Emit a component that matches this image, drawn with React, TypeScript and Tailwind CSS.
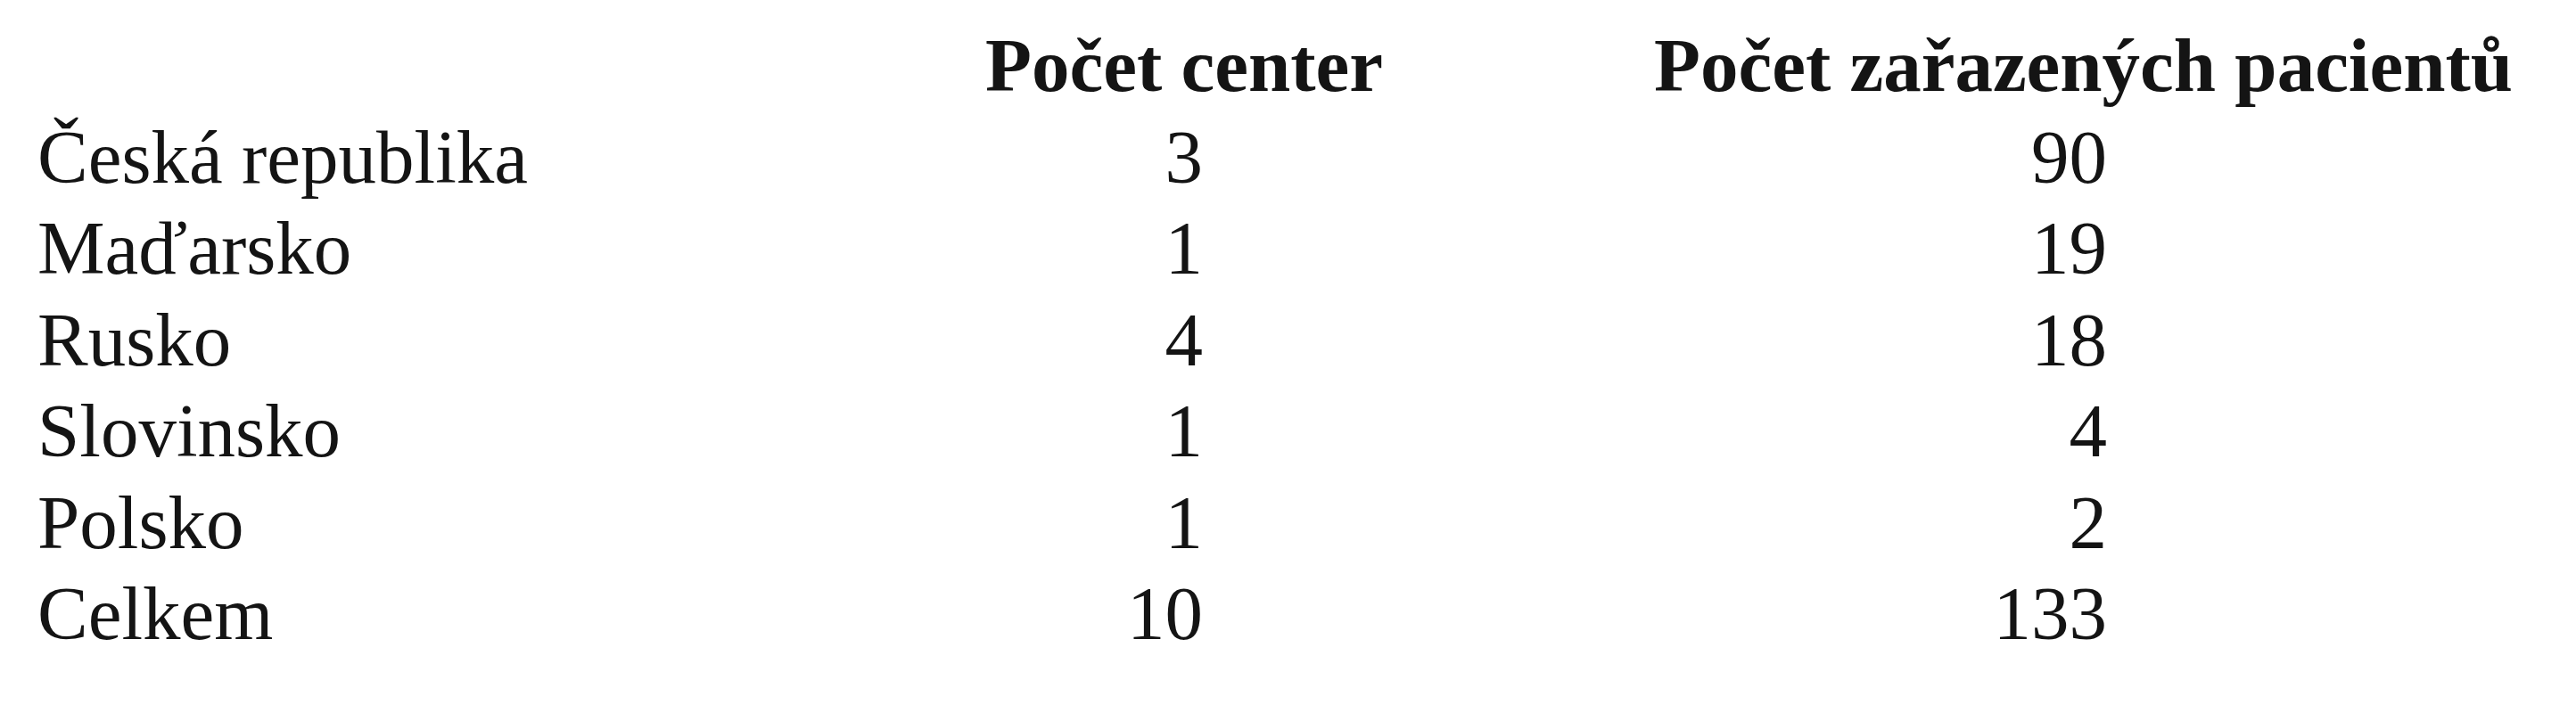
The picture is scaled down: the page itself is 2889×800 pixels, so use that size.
const rows = [
  { country: "Česká republika", centers: "3", patients: "90" },
  { country: "Maďarsko", centers: "1", patients: "19" },
  { country: "Rusko", centers: "4", patients: "18" },
  { country: "Slovinsko", centers: "1", patients: "4" },
  { country: "Polsko", centers: "1", patients: "2" },
  { country: "Celkem", centers: "10", patients: "133" },
];

export default function App() {
  return (
    <div
      className="w-[2889px] h-[800px] bg-white text-[#141414] pt-[22px] pl-[42px] text-[85px] leading-[102.5px]"
      style={{ fontFamily: '"Liberation Serif", "Times New Roman", serif' }}
    >
      <div className="grid grid-cols-[1063px_750px_1fr]">
        {/* header */}
        <div />
        <div className="font-bold">Počet center</div>
        <div className="font-bold">Počet zařazených pacientů</div>

        {rows.map((r) => (
          <div key={r.country} className="contents">
            <div>{r.country}</div>
            <div>
              <div className="w-[244px] text-right">{r.centers}</div>
            </div>
            <div>
              <div className="w-[508px] text-right">{r.patients}</div>
            </div>
          </div>
        ))}
      </div>
    </div>
  );
}
